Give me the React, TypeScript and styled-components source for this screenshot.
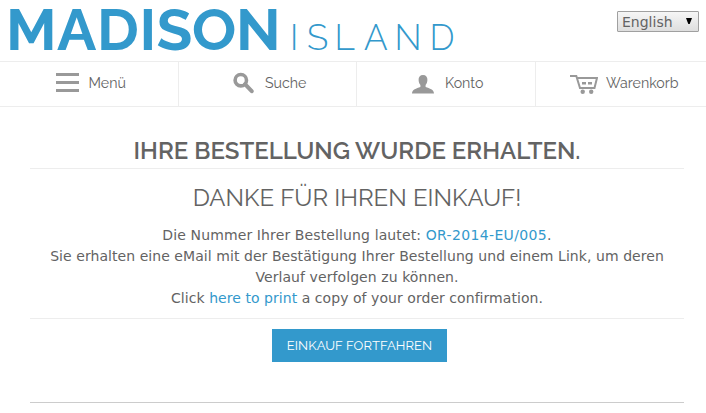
import React from 'react';
import styled, { createGlobalStyle } from 'styled-components';

const Global = createGlobalStyle`
  * { box-sizing: border-box; }
  body { margin: 0; background: #fff; color: #636363; overflow: hidden; }
`;

const display = `'Raleway', 'Lato', 'Open Sans', sans-serif`;
const bodyFont = `'Verdana', 'DejaVu Sans', sans-serif`;

const Page = styled.div`
  width: 706px;
  height: 413px;
  display: flex;
  flex-direction: column;
`;

const Header = styled.header`
  height: 61px;
  display: flex;
  justify-content: space-between;
  align-items: flex-start;
  padding-right: 7px;
`;

const Logo = styled.svg`
  display: block;
  width: 470px;
  height: 61px;
  overflow: visible;
  fill: #3399cc;
  font-family: ${display};
`;

const Language = styled.button`
  width: 82px;
  height: 21px;
  margin: 11px 0 0;
  padding: 1px 5px 0 4px;
  display: flex;
  align-items: center;
  justify-content: space-between;
  border: 1px solid #a0a0a0;
  border-radius: 1px;
  background: linear-gradient(#f6f6f6, #dedede);
  color: #636363;
  font: 14px/20px ${bodyFont};
`;

const Arrow = styled.svg`
  width: 8px;
  height: 8px;
  margin-bottom: 2px;
`;

const Nav = styled.nav`
  display: grid;
  grid-template-columns: 179px 178px 179px 170px;
  height: 46px;
  border-top: 1px solid #ededed;
  border-bottom: 1px solid #ededed;
`;

const NavItem = styled.a<{ $start: number }>`
  display: flex;
  align-items: center;
  padding-left: ${p => p.$start}px;
  padding-bottom: 4px;
  border-right: 1px solid #ededed;
  &:last-child { border-right: 0; }
`;

const Icon = styled.svg<{ $gap: number }>`
  width: 28px;
  height: 24px;
  flex: none;
  margin-right: ${p => p.$gap}px;
  fill: #999;
`;

const NavLabel = styled.span`
  margin-top: 2px;
  font: 400 14.2px/20px ${display};
  white-space: nowrap;
`;

const Main = styled.main`
  margin: 0 22px 0 30px;
  display: flex;
  flex-direction: column;
`;

const Title = styled.h1`
  height: 62px;
  margin: 0;
  padding-top: 29px;
  border-bottom: 1px solid #ededed;
  font: 600 24px/30px ${display};
  text-align: center;
  white-space: nowrap;
`;

const Subtitle = styled.h2`
  margin: 14px 0 12px;
  font: 400 24px/30px ${display};
  text-align: center;
  white-space: nowrap;
`;

const Message = styled.div`
  height: 94px;
  border-bottom: 1px solid #ededed;
`;

const Line = styled.p<{ $spacing: number }>`
  margin: 0;
  font: 14px/21px ${bodyFont};
  letter-spacing: ${p => p.$spacing}px;
  text-align: center;
  white-space: nowrap;
`;

const Link = styled.a`
  color: #3399cc;
`;

const OrderNumber = styled(Link)`
  letter-spacing: 0.35px;
`;

const Continue = styled.button`
  align-self: center;
  width: 175px;
  height: 33px;
  margin: 10px 0 0 5px;
  padding: 0;
  border: 0;
  background: #3399cc;
  color: #fff;
  font: 400 13px/33px ${display};
  letter-spacing: 0.1px;
  white-space: nowrap;
`;

const FooterRule = styled.hr`
  width: 100%;
  height: 1px;
  margin: 40px 0 0;
  border: 0;
  background: #ccc;
`;

export default function App() {
  return (
    <Page>
      <Global />
      <Header>
        <Logo viewBox="0 0 470 61" role="img" aria-label="Madison Island">
          <text x="6 57 97 139.5 156.500 192 236" y="50" fontSize="58.5" fontWeight="700">MADISON</text>
          <text x="290 307 334.5 364 394.5 429.5" y="50" fontSize="35" fontWeight="350">ISLAND</text>
        </Logo>
        <Language>
          English
          <Arrow viewBox="0 0 8 8"><path d="M1 1h6L4.7 7H3.3z" fill="#000" /></Arrow>
        </Language>
      </Header>
      <Nav>
        <NavItem $start={56}>
          <Icon $gap={4.5} viewBox="0 0 28 24">
            <path d="M0 3h23v3H0zM0 11h23v3H0zM0 19h23v3H0z" />
          </Icon>
          <NavLabel>Menü</NavLabel>
        </NavItem>
        <NavItem $start={54}>
          <Icon $gap={4} viewBox="0 0 28 24">
            <circle cx="7.8" cy="10.2" r="5.7" fill="none" stroke="#999" strokeWidth="3.6" />
            <path d="M12 14.2l6.7 7" stroke="#999" strokeWidth="4" strokeLinecap="round" />
          </Icon>
          <NavLabel>Suche</NavLabel>
        </NavItem>
        <NavItem $start={55}>
          <Icon $gap={5} viewBox="0 -1 28 24">
            <path d="M11 4c3 0 4.6 2 4.4 5-.1 2.2-.8 4-1.8 5v2c4 1.5 8.4 2.5 8.4 6.500H0c0-4 4.400-5 8.400-6.500v-2c-1-1-1.700-2.800-1.800-5C6.400 6 8 4 11 4z" />
          </Icon>
          <NavLabel>Konto</NavLabel>
        </NavItem>
        <NavItem $start={34}>
          <Icon $gap={8} viewBox="0 -1 28 24">
            <path d="M0 5h6.3L10 17h14.5L27 7H7" fill="none" stroke="#999" strokeWidth="2" />
            <path d="M12 11h4v2.500h-4zM18 11h4v2.500h-4z" />
            <circle cx="12.7" cy="20.8" r="2.2" />
            <circle cx="21.2" cy="20.8" r="2.2" />
          </Icon>
          <NavLabel>Warenkorb</NavLabel>
        </NavItem>
      </Nav>
      <Main>
        <Title>IHRE BESTELLUNG WURDE ERHALTEN.</Title>
        <Subtitle>DANKE FÜR IHREN EINKAUF!</Subtitle>
        <Message>
          <Line $spacing={0.12}>Die Nummer Ihrer Bestellung lautet: <OrderNumber>OR-2014-EU/005</OrderNumber>.</Line>
          <Line $spacing={0.06}>Sie erhalten eine eMail mit der Bestätigung Ihrer Bestellung und einem Link, um deren</Line>
          <Line $spacing={0.08}>Verlauf verfolgen zu können.</Line>
          <Line $spacing={0.05}>Click <Link>here to print</Link> a copy of your order confirmation.</Line>
        </Message>
        <Continue>EINKAUF FORTFAHREN</Continue>
        <FooterRule />
      </Main>
    </Page>
  );
}
